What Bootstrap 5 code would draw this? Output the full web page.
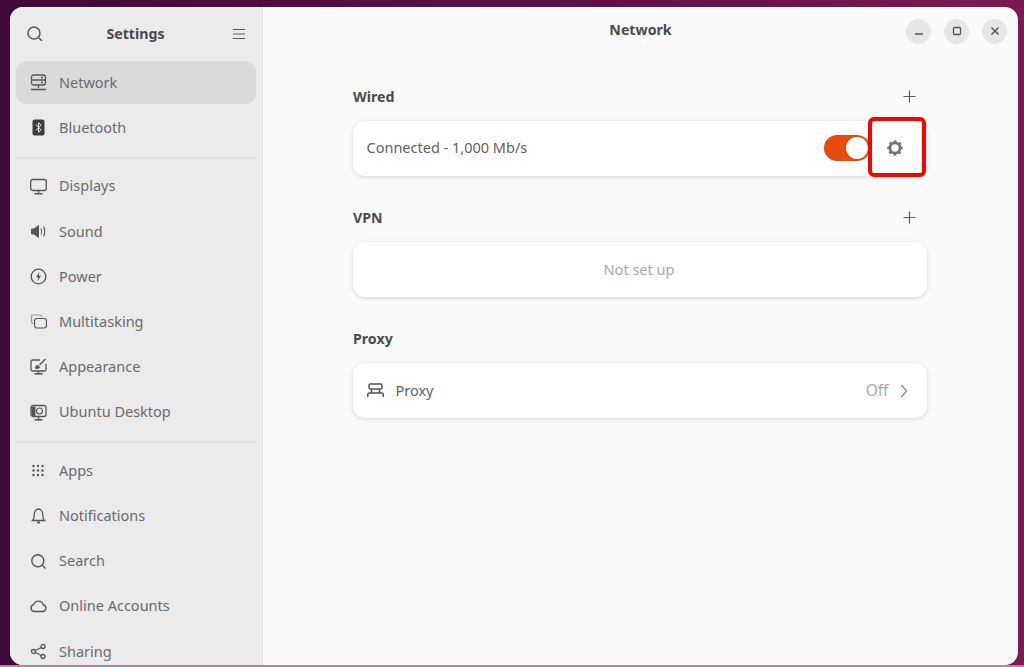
<!DOCTYPE html>
<html lang="en">
<head>
    <meta charset="UTF-8">
    <title>Settings - Network</title>
    <link href="https://cdn.jsdelivr.net/npm/bootstrap@5.3.2/dist/css/bootstrap.min.css" rel="stylesheet">
    <style>
        html, body {
            height: 100%;
            overflow: hidden;
        }

        body {
            font-family: "Noto Sans", "Open Sans", sans-serif;
            font-size: 14.5px;
            color: #626262;
            background: linear-gradient(90deg, #3f0a38 0%, #5a1145 50%, #7c1a50 100%);
            box-shadow: inset 0 -2px 0 #a98aa6;
            padding: 7px 6px 2px 10px;
        }

        svg {
            display: block;
            flex: none;
        }

        .app-window {
            height: 658px;
            background: #fafafa;
            border-radius: 13px;
            overflow: hidden;
        }

        .side-pane {
            width: 253px;
            flex: none;
            background: #ebebeb;
            border-right: 1px solid #e0e0e0;
            padding: 0 6px;
        }

        .side-head {
            height: 54px;
            padding: 0 11px 0 10px;
        }

        .side-title {
            font-size: 14.2px;
            font-weight: 700;
            color: #4a4a4a;
            margin-left: -6px;
        }

        .side-item {
            height: 43px;
            margin-bottom: 2.2px;
            padding-left: 14px;
            border-radius: 10px;
            gap: 12px;
            color: #6a6a6a;
            white-space: nowrap;
        }

        .side-item.is-active {
            background: #dadada;
        }

        .side-sep {
            height: 2px;
            background: #e0e0e0;
            margin: 7.5px 0 6px;
        }

        .main-head {
            display: grid;
            grid-template-columns: 1fr auto 1fr;
            align-items: center;
            height: 46px;
            padding: 0 11px;
        }

        .main-title {
            font-size: 14.2px;
            font-weight: 700;
            color: #4a4a4a;
        }

        .win-btns {
            gap: 13px;
            padding-top: 2px;
        }

        .win-btn {
            width: 25px;
            height: 25px;
            border-radius: 50%;
            background: #e6e6e6;
        }

        .main-body {
            width: 574px;
            margin: 0 auto;
            padding-top: 29px;
            transform: translateX(-1px);
        }

        .group-head {
            height: 29px;
            margin-bottom: 10px;
            padding-left: .5px;
            font-size: 14.2px;
            font-weight: 700;
            color: #4a4a4a;
        }

        .group-add {
            margin-right: 11px;
        }

        .group-box {
            height: 55px;
            margin-bottom: 27px;
            padding: 0 15px 0 14px;
            background: #fff;
            border-radius: 12px;
            box-shadow: 0 1px 4px rgba(0, 0, 0, .16);
            position: relative;
        }

        .group-box.is-wired {
            padding-bottom: 2px;
        }

        .muted-txt {
            color: #a9a9a9;
        }

        .off-txt {
            font-size: 15.5px;
            margin-right: 11px;
        }

        .toggle-track {
            width: 46px;
            height: 26px;
            border-radius: 13px;
            background: #e64a0c;
            padding: 2px;
            margin-right: 42px;
        }

        .toggle-knob {
            width: 22px;
            height: 22px;
            border-radius: 50%;
            background: #fff;
        }

        .gear-mark {
            position: absolute;
            top: -4px;
            right: 1px;
            width: 58px;
            height: 60px;
            padding: 2px 4px 0 0;
            border: 4px solid #f00;
            border-radius: 6px;
        }
    </style>
</head>
<body>
    <div class="app-window d-flex">
        <div class="side-pane">
            <div class="side-head d-flex align-items-center justify-content-between">
                <svg width="18" height="18" viewBox="0 0 18 18" fill="none" stroke="#5a5a5a" stroke-width="1.5"><circle cx="8" cy="8" r="6"/><path d="M12.5 12.5 16 16"/></svg>
                <span class="side-title">Settings</span>
                <svg width="12" height="12" viewBox="0 0 12 12" fill="none" stroke="#5a5a5a" stroke-width="1.2"><path d="M0 1.5h12M0 6h12M0 10.5h12"/></svg>
            </div>

            <div class="side-item is-active d-flex align-items-center">
                <svg width="17" height="17" viewBox="0 0 17 17" fill="none" stroke="#555" stroke-width="1.3"><rect x="1.5" y="1" width="14" height="10" rx="2"/><path d="M1.5 6h14M11 3.5h2M11 8.5h2M8.5 11v3M1 15.5h15"/></svg>
                <span>Network</span>
            </div>
            <div class="side-item d-flex align-items-center">
                <svg width="17" height="17" viewBox="0 0 17 17"><rect x="2.500" y="0.500" width="12" height="16" rx="2" fill="#3d3d3d"/><path d="M5.800 5.500 11 10.800 8.500 13.300V3.700L11 6.200 5.800 11.500" fill="none" stroke="#eee" stroke-width="1"/></svg>
                <span>Bluetooth</span>
            </div>
            <div class="side-sep"></div>

            <div class="side-item d-flex align-items-center">
                <svg width="17" height="17" viewBox="0 0 17 17" fill="none" stroke="#555" stroke-width="1.3"><rect x="0.700" y="1.500" width="15.600" height="11" rx="2"/><path d="M8.500 13v2" /><path d="M4.500 15.800h8" stroke-width="1.600"/></svg>
                <span>Displays</span>
            </div>
            <div class="side-item d-flex align-items-center">
                <svg width="17" height="17" viewBox="0 0 17 17" fill="none" stroke="#555"><path d="M1.500 6h2.500L8.500 2.500v12L4 11H1.500z" fill="#555"/><path d="M11 5.500q1.500 3 0 6M13.500 3.500q2.500 5 0 10" stroke-width="1.100"/></svg>
                <span>Sound</span>
            </div>
            <div class="side-item d-flex align-items-center">
                <svg width="17" height="17" viewBox="0 0 17 17" fill="none" stroke="#555" stroke-width="1.300"><circle cx="8.500" cy="8.500" r="7.300"/><path d="M9.500 3.800 6 9.200h2.300L7.500 13.200 11 7.800H8.700z" fill="#555" stroke="none"/></svg>
                <span>Power</span>
            </div>
            <div class="side-item d-flex align-items-center">
                <svg width="17" height="17" viewBox="0 0 17 17" fill="none" stroke="#555" stroke-width="1.200"><path d="M3.500 10.500H2.500a1.500 1.500 0 0 1-1-1.500V3.500a1.500 1.500 0 0 1 1.500-1.500H10a1.500 1.500 0 0 1 1.500 1.500v.5" stroke="#999"/><rect x="4.500" y="5.500" width="12" height="9.500" rx="2.500"/></svg>
                <span>Multitasking</span>
            </div>
            <div class="side-item d-flex align-items-center">
                <svg width="17" height="17" viewBox="0 0 17 17" fill="none" stroke="#555" stroke-width="1.300"><path d="M10 2H2.500a1.500 1.500 0 0 0-1.500 1.500v8A1.500 1.500 0 0 0 2.500 13h12a1.500 1.500 0 0 0 1.500-1.500V6"/><path d="M8.500 13v2"/><path d="M4.500 15.800h8" stroke-width="1.600"/><path d="M15.500 1 9.500 7" stroke-width="1.500"/><path d="M5 10.500c0-2 1-3.500 2.800-3.500L10 9c0 1.500-2.500 2.500-5 1.500z" fill="#555" stroke="none"/></svg>
                <span>Appearance</span>
            </div>
            <div class="side-item d-flex align-items-center">
                <svg width="17" height="17" viewBox="0 0 17 17" fill="none" stroke="#555" stroke-width="1.300"><rect x="1" y="1.500" width="15" height="11" rx="2"/><path d="M1.500 2.500h4v9.500h-4z" fill="#555" stroke="none"/><circle cx="9.500" cy="7" r="3" stroke-width="1.100"/><path d="M8.500 13v2"/><path d="M4.500 15.800h8" stroke-width="1.600"/></svg>
                <span>Ubuntu Desktop</span>
            </div>
            <div class="side-sep"></div>

            <div class="side-item d-flex align-items-center">
                <svg width="17" height="17" viewBox="0 0 17 17" fill="#555"><circle cx="3.500" cy="4" r="1.200"/><circle cx="8" cy="4" r="1.200"/><circle cx="12.500" cy="4" r="1.200"/><circle cx="3.500" cy="8.500" r="1.200"/><circle cx="8" cy="8.500" r="1.200"/><circle cx="12.500" cy="8.500" r="1.200"/><circle cx="3.500" cy="13" r="1.200"/><circle cx="8" cy="13" r="1.200"/><circle cx="12.500" cy="13" r="1.200"/></svg>
                <span>Apps</span>
            </div>
            <div class="side-item d-flex align-items-center">
                <svg width="17" height="17" viewBox="0 0 17 17" fill="none" stroke="#555" stroke-width="1.300"><path d="M2.500 13.500c1.500-1.500 1.800-3 1.800-6 0-3 1.800-5.500 4.200-5.500s4.200 2.500 4.200 5.500c0 3 .3 4.500 1.800 6z"/><path d="M7 15.500h3" stroke-width="1.800"/></svg>
                <span>Notifications</span>
            </div>
            <div class="side-item d-flex align-items-center">
                <svg width="17" height="17" viewBox="0 0 17 17" fill="none" stroke="#555" stroke-width="1.400"><circle cx="7.800" cy="7.800" r="6"/><path d="M12.300 12.300 15.500 15.500"/></svg>
                <span>Search</span>
            </div>
            <div class="side-item d-flex align-items-center">
                <svg width="17" height="17" viewBox="0 0 17 17" fill="none" stroke="#555" stroke-width="1.300"><path d="M4.500 13.500a3.500 3.500 0 0 1-.8-6.900 5 5 0 0 1 9.600 .4 3.300 3.300 0 0 1-.3 6.500z"/></svg>
                <span>Online Accounts</span>
            </div>
            <div class="side-item d-flex align-items-center">
                <svg width="17" height="17" viewBox="0 0 17 17" fill="none" stroke="#555" stroke-width="1.300"><circle cx="3.500" cy="8.500" r="2"/><circle cx="13" cy="3.500" r="2"/><circle cx="13" cy="13.500" r="2"/><path d="M5.300 7.500 11.200 4.500M5.300 9.500 11.200 12.500"/></svg>
                <span>Sharing</span>
            </div>
        </div>

        <div class="flex-grow-1 d-flex flex-column">
            <div class="main-head">
                <span></span>
                <span class="main-title">Network</span>
                <div class="win-btns d-flex justify-content-end">
                    <div class="win-btn d-flex align-items-center justify-content-center">
                        <svg width="10" height="10" viewBox="0 0 10 10" stroke="#555" stroke-width="1.300"><path d="M1 8h8"/></svg>
                    </div>
                    <div class="win-btn d-flex align-items-center justify-content-center">
                        <svg width="10" height="10" viewBox="0 0 10 10" fill="none" stroke="#555" stroke-width="1.300"><rect x="1.500" y="1.500" width="7" height="7" rx="1"/></svg>
                    </div>
                    <div class="win-btn d-flex align-items-center justify-content-center">
                        <svg width="10" height="10" viewBox="0 0 10 10" stroke="#555" stroke-width="1.500"><path d="M1.500 1.500l7 7M8.500 1.500l-7 7"/></svg>
                    </div>
                </div>
            </div>

            <div class="main-body">
                <div class="group-head d-flex align-items-center justify-content-between">
                    <span>Wired</span>
                    <svg class="group-add" width="13" height="13" viewBox="0 0 13 13" stroke="#5a5a5a" stroke-width="1.200"><path d="M6.500 .5v12M.5 6.500h12"/></svg>
                </div>
                <div class="group-box is-wired d-flex align-items-center justify-content-between">
                    <span>Connected - 1,000 Mb/s</span>
                    <div class="toggle-track d-flex justify-content-end">
                        <div class="toggle-knob"></div>
                    </div>
                    <div class="gear-mark d-flex align-items-center justify-content-center">
                        <svg width="18" height="18" viewBox="0 0 18 18" fill="none" stroke="#727272"><circle cx="9" cy="9" r="5.100" stroke-width="2.800"/><circle cx="9" cy="9" r="6.900" stroke-width="1.600" stroke-dasharray="2.710 2.710" stroke-dashoffset="1.350"/></svg>
                    </div>
                </div>

                <div class="group-head d-flex align-items-center justify-content-between">
                    <span>VPN</span>
                    <svg class="group-add" width="13" height="13" viewBox="0 0 13 13" stroke="#5a5a5a" stroke-width="1.200"><path d="M6.500 .5v12M.5 6.500h12"/></svg>
                </div>
                <div class="group-box d-flex align-items-center justify-content-center">
                    <span class="muted-txt">Not set up</span>
                </div>

                <div class="group-head d-flex align-items-center">
                    <span>Proxy</span>
                </div>
                <div class="group-box d-flex align-items-center">
                    <svg class="me-2" width="17" height="17" viewBox="0 0 17 17" fill="none" stroke="#555" stroke-width="1.500"><rect x="2" y="2" width="13" height="5" rx="1.500"/><path d="M4.500 7v3.500M12.500 7v3.500M.8 15v-2.500a1.500 1.500 0 0 1 1.500-1.500h12.400a1.500 1.500 0 0 1 1.500 1.500V15"/></svg>
                    <span class="ms-1">Proxy</span>
                    <span class="muted-txt off-txt ms-auto">Off</span>
                    <svg class="me-1" width="8" height="14" viewBox="0 0 8 14" fill="none" stroke="#8a8a8a" stroke-width="1.300"><path d="M1.500 1 6.500 7 1.500 13"/></svg>
                </div>
            </div>
        </div>
    </div>
</body>
</html>
